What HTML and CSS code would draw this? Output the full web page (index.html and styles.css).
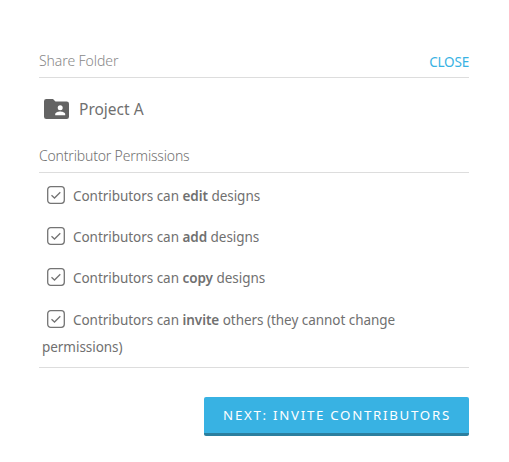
FILE: index.html
```html
<!DOCTYPE html>
<html lang="en">
<head>
    <meta charset="UTF-8">
    <meta name="viewport" content="width=device-width, initial-scale=1.0">
    <title>Share Folder</title>
    <link rel="stylesheet" href="styles.css">
</head>
<body>
    <div class="modal">
        <div class="modal-header">
            <h2>Share Folder</h2>
            <a href="#" class="close">CLOSE</a>
        </div>

        <div class="folder">
            <svg class="folder-icon" viewBox="0 0 25 20">
                <path fill="#636363" d="M2.3 0H9l2.5 2.5h11.2A2.3 2.3 0 0 1 25 4.8v12.9a2.3 2.3 0 0 1-2.3 2.3H2.3A2.3 2.3 0 0 1 0 17.7V2.3A2.3 2.3 0 0 1 2.3 0z"/>
                <circle fill="#fff" cx="16.2" cy="8.8" r="2.5"/>
                <path fill="#fff" d="M11.2 16.2V15c0-1.700 3.300-2.600 5-2.600s5 .9 5 2.600v1.200z"/>
            </svg>
            <span class="folder-name">Project A</span>
        </div>

        <h3>Contributor Permissions</h3>
        <div class="permissions">
            <label class="permission">
                <svg class="check" viewBox="0 0 18 18"><rect x=".7" y=".7" width="16.600" height="16.600" rx="3"/><path d="M4.500 9.200l3 2.800 5.800-5.800"/></svg>
                <span>Contributors can <b>edit</b> designs</span>
            </label>
            <label class="permission">
                <svg class="check" viewBox="0 0 18 18"><rect x=".7" y=".7" width="16.600" height="16.600" rx="3"/><path d="M4.500 9.200l3 2.800 5.800-5.800"/></svg>
                <span>Contributors can <b>add</b> designs</span>
            </label>
            <label class="permission">
                <svg class="check" viewBox="0 0 18 18"><rect x=".7" y=".7" width="16.600" height="16.600" rx="3"/><path d="M4.500 9.200l3 2.800 5.800-5.800"/></svg>
                <span>Contributors can <b>copy</b> designs</span>
            </label>
            <label class="permission">
                <svg class="check" viewBox="0 0 18 18"><rect x=".7" y=".7" width="16.600" height="16.600" rx="3"/><path d="M4.500 9.200l3 2.800 5.800-5.800"/></svg>
                <span>Contributors can <b>invite</b> others (they cannot change<br>permissions)</span>
            </label>
        </div>

        <div class="actions">
            <button class="btn">NEXT: INVITE CONTRIBUTORS</button>
        </div>
    </div>
</body>
</html>
```
FILE: styles.css
```css
body {
    font-family: "Noto Sans", sans-serif;
    margin: 0;
    background-color: #fff;
    color: #707070;
    font-size: 14px;
}
.modal {
    margin: 46px 40px 0 39px;
}
.modal-header {
    display: flex;
    justify-content: space-between;
    height: 31px;
    border-bottom: 1px solid #ddd;
}
h2 {
    margin: 0;
    font-size: 14px;
    line-height: 30px;
    font-weight: 300;
    letter-spacing: -0.08px;
    color: #888;
}
.close {
    color: #38b2e3;
    text-decoration: none;
    font-size: 13.5px;
    letter-spacing: -0.2px;
    line-height: 32px;
}
.folder {
    display: flex;
    align-items: center;
    height: 62px;
    padding-left: 5px;
}
.folder-icon {
    width: 25px;
    height: 20px;
    margin-right: 10px;
}
.folder-name {
    font-size: 15.5px;
    line-height: 24px;
}
h3 {
    margin: 0;
    height: 32px;
    line-height: 32px;
    font-size: 14px;
    font-weight: 300;
    letter-spacing: -0.18px;
    border-bottom: 1px solid #ddd;
}
.permissions {
    box-sizing: border-box;
    height: 195px;
    padding: 10px 0 0 3px;
    border-bottom: 1px solid #ddd;
}
.permission {
    display: block;
    height: 27px;
    margin-bottom: 14px;
    line-height: 27px;
    font-size: 13.5px;
    letter-spacing: -0.04px;
    white-space: nowrap;
}
.permission:last-child {
    padding-top: 1px;
}
.check {
    width: 18px;
    height: 18px;
    margin: 0 4.5px 0 5px;
    vertical-align: -3px;
    fill: none;
    stroke: #747474;
    stroke-width: 1.3;
}
.permission b {
    font-weight: 600;
}
.actions {
    display: flex;
    justify-content: flex-end;
    margin-top: 29px;
}
.btn {
    width: 265px;
    height: 39px;
    padding: 0 0 0 1px;
    border: none;
    border-bottom: 3px solid #2b7f9f;
    border-radius: 2px;
    background-color: #38b2e3;
    color: #fff;
    font-family: inherit;
    font-size: 13.3px;
    letter-spacing: 1.7px;
    white-space: nowrap;
}
```
